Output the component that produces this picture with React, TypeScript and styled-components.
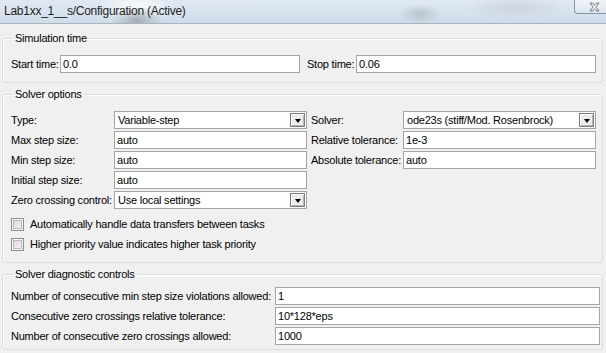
import React from "react";
import styled, { createGlobalStyle } from "styled-components";

const Global = createGlobalStyle`
  html, body { margin: 0; padding: 0; }
  body {
    background: #f0f0f0;
    font-family: "Liberation Sans", Arial, sans-serif;
    font-size: 11px;
    letter-spacing: -0.22px;
    color: #000;
    width: 606px;
    height: 353px;
    overflow: hidden;
  }
`;

const Window = styled.div`
  width: 606px;
  height: 353px;
  display: flex;
  flex-direction: column;
  background: #f0f0f0;
`;

const TitleBar = styled.div`
  height: 23px;
  flex: none;
  display: flex;
  align-items: flex-start;
  justify-content: space-between;
  border-bottom: 1px solid #a7b4c2;
  background:
    radial-gradient(ellipse 26px 14px at 137px 20px, rgba(120,128,138,0.55), rgba(120,128,138,0) 100%),
    radial-gradient(ellipse 40px 16px at 135px 8px, rgba(255,255,255,0.9), rgba(255,255,255,0) 100%),
    radial-gradient(ellipse 22px 10px at 420px 14px, rgba(150,158,168,0.45), rgba(150,158,168,0) 100%),
    radial-gradient(ellipse 50px 12px at 515px 8px, rgba(200,206,214,0.7), rgba(200,206,214,0) 100%),
    linear-gradient(to bottom, #dfe8f2 0%, #d6e2ee 60%, #cfdbe8 100%);
`;

const Title = styled.div`
  font-family: "Liberation Sans", Arial, sans-serif;
  font-size: 12px;
  line-height: 16px;
  padding: 3px 0 0 4px;
  color: #1e1e1e;
  letter-spacing: -0.25px;
`;

const CloseButton = styled.div`
  width: 33px;
  height: 14px;
  margin-right: -1px;
  border: 1px solid #8a97a6;
  border-top: none;
  border-right: none;
  border-bottom-left-radius: 4px;
  background: linear-gradient(to bottom, rgba(255,255,255,0.55), rgba(225,232,240,0.6));
  display: flex;
  align-items: center;
  justify-content: center;
  padding-left: 6px;
  box-sizing: border-box;
`;

const Content = styled.div`
  padding: 8px 3px 0 2px;
  display: flex;
  flex-direction: column;
  gap: 5px;
`;

const Group = styled.fieldset<{ $pt: number; $pb: number }>`
  margin: 0;
  padding: ${(p) => p.$pt}px 6px ${(p) => p.$pb}px 6px;
  border: 1px solid #d5dfe5;
  border-radius: 3px;
  box-shadow: inset 1px 1px 0 #ffffff;
  min-width: 0;
`;

const Legend = styled.legend`
  padding: 0 2px;
  margin-left: 4px;
  line-height: 13px;
  font-size: 11px;
`;

const FormGrid = styled.div<{ $cols: string }>`
  display: grid;
  grid-template-columns: ${(p) => p.$cols};
  grid-auto-rows: 18px;
  row-gap: 2px;
  margin-left: 2px;
`;

const Label = styled.div<{ $indent?: number }>`
  display: flex;
  align-items: center;
  padding-left: ${(p) => p.$indent ?? 0}px;
  white-space: nowrap;
  line-height: 13px;
`;

const TextBox = styled.div`
  box-sizing: border-box;
  height: 18px;
  background: #fff;
  border: 1px solid #a5a5a5;
  display: flex;
  align-items: center;
  padding-left: 2px;
  white-space: nowrap;
  overflow: hidden;
`;

const Combo = styled.div`
  box-sizing: border-box;
  height: 18px;
  background: #fff;
  border: 1px solid #a5a5a5;
  display: flex;
  align-items: center;
  padding: 0 1px 0 3px;
`;

const ComboText = styled.span`
  flex: 1;
  white-space: nowrap;
  overflow: hidden;
`;

const ArrowButton = styled.div`
  box-sizing: border-box;
  width: 15px;
  height: 14px;
  background: #ececec;
  border: 1px solid #7c7c7c;
  box-shadow: inset 1px 1px 0 #ffffff, inset -1px -1px 0 #b8b8b8;
  display: flex;
  align-items: center;
  justify-content: center;
`;

const Triangle = styled.span`
  width: 0;
  height: 0;
  border-left: 3.5px solid transparent;
  border-right: 3.5px solid transparent;
  border-top: 4px solid #000;
  margin-top: 1px;
`;

const CheckList = styled.div`
  display: flex;
  flex-direction: column;
  gap: 7px;
  margin-top: 9px;
  margin-left: 2px;
`;

const CheckRow = styled.label`
  display: flex;
  align-items: center;
  gap: 6px;
  height: 13px;
  line-height: 13px;
  white-space: nowrap;
`;

const CheckBox = styled.span`
  box-sizing: border-box;
  width: 13px;
  height: 13px;
  flex: none;
  border: 1px solid #8e8f8f;
  box-shadow: inset 0 0 0 1px #f4f4f4, inset 0 0 0 2px #b9b9b9;
  background: linear-gradient(135deg, #d8d8d8, #f6f6f6);
`;

const Dropdown = ({ value }: { value: string }) => (
  <Combo>
    <ComboText>{value}</ComboText>
    <ArrowButton>
      <Triangle />
    </ArrowButton>
  </Combo>
);

const CloseGlyph = () => (
  <svg width="11" height="10" viewBox="0 0 11 10">
    <path
      d="M1 1 L3.5 1 L5.5 3.3 L7.5 1 L10 1 L6.8 5 L10 9 L7.5 9 L5.5 6.7 L3.5 9 L1 9 L4.2 5 Z"
      fill="#ffffff"
      stroke="#5f6770"
      strokeWidth="0.9"
      strokeLinejoin="round"
    />
  </svg>
);

export default function App() {
  return (
    <>
      <Global />
      <Window>
        <TitleBar>
          <Title>Lab1xx_1__s/Configuration (Active)</Title>
          <CloseButton>
            <CloseGlyph />
          </CloseButton>
        </TitleBar>
        <Content>
          <Group $pt={10} $pb={9}>
            <Legend>Simulation time</Legend>
            <FormGrid $cols="49px 240px 56px 240px">
              <Label>Start time:</Label>
              <TextBox>0.0</TextBox>
              <Label $indent={7}>Stop time:</Label>
              <TextBox>0.06</TextBox>
            </FormGrid>
          </Group>

          <Group $pt={10} $pb={11}>
            <Legend>Solver options</Legend>
            <FormGrid $cols="103px 193px 96px 193px">
              <Label>Type:</Label>
              <Dropdown value="Variable-step" />
              <Label $indent={4}>Solver:</Label>
              <Dropdown value="ode23s (stiff/Mod. Rosenbrock)" />

              <Label>Max step size:</Label>
              <TextBox>auto</TextBox>
              <Label $indent={4}>Relative tolerance:</Label>
              <TextBox>1e-3</TextBox>

              <Label>Min step size:</Label>
              <TextBox>auto</TextBox>
              <Label $indent={4}>Absolute tolerance:</Label>
              <TextBox>auto</TextBox>

              <Label>Initial step size:</Label>
              <TextBox>auto</TextBox>
              <Label />
              <Label />

              <Label>Zero crossing control:</Label>
              <Dropdown value="Use local settings" />
            </FormGrid>
            <CheckList>
              <CheckRow>
                <CheckBox />
                Automatically handle data transfers between tasks
              </CheckRow>
              <CheckRow>
                <CheckBox />
                Higher priority value indicates higher task priority
              </CheckRow>
            </CheckList>
          </Group>

          <Group $pt={6} $pb={4}>
            <Legend>Solver diagnostic controls</Legend>
            <FormGrid $cols="264px 325px">
              <Label>Number of consecutive min step size violations allowed:</Label>
              <TextBox>1</TextBox>
              <Label>Consecutive zero crossings relative tolerance:</Label>
              <TextBox>10*128*eps</TextBox>
              <Label>Number of consecutive zero crossings allowed:</Label>
              <TextBox>1000</TextBox>
            </FormGrid>
          </Group>
        </Content>
      </Window>
    </>
  );
}
